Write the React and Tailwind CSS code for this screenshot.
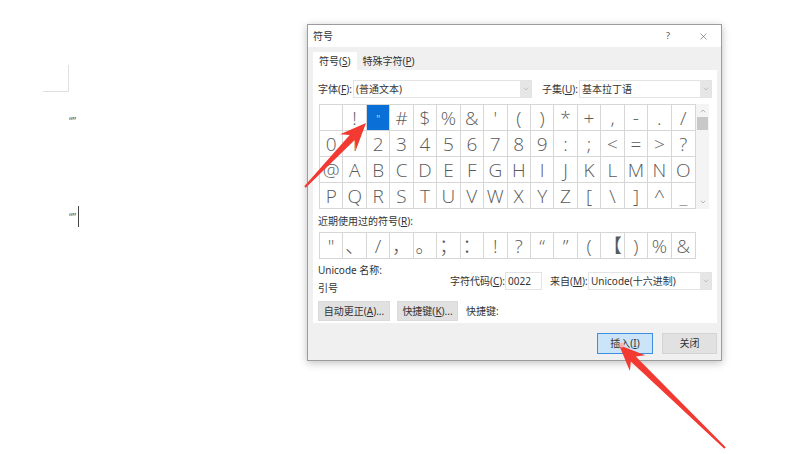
import React from "react";
import { X, ChevronDown, ChevronUp } from "lucide-react";

const rows = [
  ["", "!", '"', "#", "$", "%", "&", "'", "(", ")", "*", "+", ",", "-", ".", "/"],
  "0123456789:;<=>?".split(""),
  "@ABCDEFGHIJKLMNO".split(""),
  "PQRSTUVWXYZ[\\]^_".split(""),
];

const recent = ['"', "、", "/", "，", "。", "；", "：", "!", "?", "“", "”", "(", "【", ")", "%", "&"];

const Dropdown = ({ width, text }) => (
  <div className={`${width} h-[18px] flex items-center bg-white border border-[#e3e3e3]`}>
    <span className="flex-1 pl-[2px] text-[10px] text-[#333] leading-[14px] whitespace-nowrap">{text}</span>
    <span className="w-[11px] h-full flex items-center justify-center bg-[#e6e6e6]">
      <ChevronDown size={8} strokeWidth={1.5} color="#9a9a9a" />
    </span>
  </div>
);

const Cell = ({ ch, selected, last }) => (
  <div
    className={`h-[25px] flex justify-center border-[#d6d6d6] ${last ? "" : "border-r"} ${
      selected ? "bg-[#0a70d8] text-white text-[11px] items-start pt-[3px]" : "items-center text-[#5a5a5a] text-[19px]"
    } font-['Open_Sans','Noto_Sans_CJK_SC',sans-serif] font-light leading-[22px]`}
  >
    {ch}
  </div>
);

const Arrows = () => (
  <svg className="absolute inset-0 pointer-events-none" width="789" height="454" viewBox="0 0 789 454">
    <polygon
      fill="#f23a32"
      points="305.7,187.7 354.7,139.9 356.1,149.4 366,123 340.1,134.2 349.7,135.1 304.3,186.3"
    />
    <polygon
      fill="#f23a32"
      points="725.7,447.3 635.8,356.5 645.3,355.3 619,345 629.9,371.1 630.8,361.5 724.3,448.7"
    />
    <circle cx="622" cy="345" r="2.5" fill="#f7b3ae" />
  </svg>
);

export default function App() {
  return (
    <div className="relative w-[789px] h-[454px] bg-white flex overflow-hidden font-['Noto_Sans','Noto_Sans_CJK_SC',sans-serif]">
      {/* document side */}
      <div className="w-[307px] shrink-0 flex flex-col pl-[43px] pt-[65px]">
        <div className="w-[26px] h-[27px] border-r border-b border-[#e0e0e0]" />
        <div className="ml-[26px] mt-[24px] text-[10px] leading-[10px] text-[#666]">“”</div>
        <div className="ml-[26px] mt-[80px] flex items-center">
          <span className="text-[10px] leading-[10px] text-[#666]">“”</span>
          <span className="ml-[2px] w-[1px] h-[21px] bg-[#444]" />
        </div>
      </div>

      {/* symbol dialog */}
      <div className="mt-[24px] w-[415px] h-[337px] flex flex-col border border-[#9c9c9c] bg-white shadow-[0_2px_8px_rgba(0,0,0,0.25)]">
        <div className="h-[22px] flex items-center justify-between pl-[5px] pr-[12px] text-[10px] text-[#333]">
          <span>符号</span>
          <div className="flex items-center gap-[28px]">
            <span className="text-[9px] text-[#555]">?</span>
            <X size={11} strokeWidth={1.2} color="#555" />
          </div>
        </div>

        <div className="flex-1 flex flex-col bg-[#f0f0f0] pl-[5px] pr-[4px]">
          <div className="flex items-end pt-[5px] h-[23px] text-[10px] text-[#333]">
            <div className="h-[18px] px-[6px] flex items-center bg-white">
              符号(<u>S</u>)
            </div>
            <div className="h-[18px] px-[6px] flex items-center">
              特殊字符(<u>P</u>)
            </div>
          </div>

          <div className="h-[253px] bg-white px-[5px] pt-[10px] flex flex-col text-[10px] text-[#333]">
            <div className="flex items-center">
              <span className="w-[35px]">
                字体(<u>F</u>):
              </span>
              <Dropdown width="w-[179px]" text="(普通文本)" />
              <span className="ml-[10px] w-[37px]">
                子集(<u>U</u>):
              </span>
              <Dropdown width="w-[133px]" text="基本拉丁语" />
            </div>

            <div className="mt-[6px] ml-[1px] flex">
              <div className="w-[377px] border border-[#d6d6d6]">
                {rows.map((row, r) => (
                  <div key={r} className={`grid grid-cols-[repeat(16,minmax(0,1fr))] ${r < 3 ? "border-b border-[#d6d6d6]" : ""}`}>
                    {row.map((ch, c) => (
                      <Cell key={c} ch={ch} selected={r === 0 && c === 2} last={c === 15} />
                    ))}
                  </div>
                ))}
              </div>
              <div className="w-[13px] flex flex-col items-center bg-[#f4f4f4]">
                <ChevronUp size={8} strokeWidth={1.5} color="#777" className="mt-[3px]" />
                <div className="mt-[2px] w-[11px] h-[13px] bg-[#c8c8c8]" />
                <div className="flex-1" />
                <ChevronDown size={8} strokeWidth={1.5} color="#777" className="mb-[3px]" />
              </div>
            </div>

            <div className="mt-[6px] leading-[13px]">
              近期使用过的符号(<u>R</u>):
            </div>
            <div className="mt-[4px] ml-[1px] w-[377px] grid grid-cols-[repeat(16,minmax(0,1fr))] border border-[#d6d6d6]">
              {recent.map((ch, i) => (
                <Cell key={i} ch={ch} last={i === 15} />
              ))}
            </div>

            <div className="mt-[5px] flex items-start">
              <div className="w-[132px] flex flex-col leading-[13px]">
                <span>Unicode 名称:</span>
                <span className="mt-[5px]">引号</span>
              </div>
              <div className="mt-[8px] flex items-center">
                <span className="w-[55px]">
                  字符代码(<u>C</u>):
                </span>
                <div className="w-[37px] h-[18px] flex items-center pl-[2px] border border-[#e3e3e3]">0022</div>
                <span className="ml-[8px] w-[38px]">
                  来自(<u>M</u>):
                </span>
                <Dropdown width="w-[124px]" text="Unicode(十六进制)" />
              </div>
            </div>

            <div className="mt-[6px] flex items-center">
              <div className="w-[72px] h-[20px] flex items-center justify-center bg-[#e1e1e1] border border-[#dadada]">
                自动更正(<u>A</u>)...
              </div>
              <div className="ml-[7px] w-[61px] h-[20px] flex items-center justify-center bg-[#e1e1e1] border border-[#dadada]">
                快捷键(<u>K</u>)...
              </div>
              <span className="ml-[8px]">快捷键:</span>
            </div>
          </div>

          <div className="pt-[10px] flex justify-end gap-[9px] text-[10px] text-[#333]">
            <div className="w-[56px] h-[21px] flex items-center justify-center bg-[#cce4f7] border border-[#3d8ee0]">
              插入(<u>I</u>)
            </div>
            <div className="w-[55px] h-[21px] flex items-center justify-center bg-[#e1e1e1] border border-[#d4d4d4]">
              关闭
            </div>
          </div>
        </div>
      </div>

      <Arrows />
    </div>
  );
}
